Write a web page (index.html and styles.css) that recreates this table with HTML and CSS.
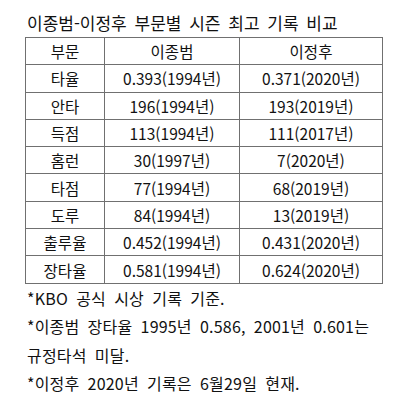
FILE: index.html
```html
<!DOCTYPE html>
<html lang="ko">
<head>
<meta charset="utf-8">
<link rel="stylesheet" href="styles.css">
</head>
<body>
<div class="wrap">
  <div class="title">이종범-이정후 부문별 시즌 최고 기록 비교</div>
  <table class="rec">
    <colgroup><col class="c1"><col class="c2"><col class="c3"></colgroup>
    <tr><td>부문</td><td>이종범</td><td>이정후</td></tr>
    <tr><td>타율</td><td>0.393(1994년)</td><td>0.371(2020년)</td></tr>
    <tr><td>안타</td><td>196(1994년)</td><td>193(2019년)</td></tr>
    <tr><td>득점</td><td>113(1994년)</td><td>111(2017년)</td></tr>
    <tr><td>홈런</td><td>30(1997년)</td><td>7(2020년)</td></tr>
    <tr><td>타점</td><td>77(1994년)</td><td>68(2019년)</td></tr>
    <tr><td>도루</td><td>84(1994년)</td><td>13(2019년)</td></tr>
    <tr><td>출루율</td><td>0.452(1994년)</td><td>0.431(2020년)</td></tr>
    <tr><td>장타율</td><td>0.581(1994년)</td><td>0.624(2020년)</td></tr>
  </table>
  <div class="notes">
    <p>*KBO 공식 시상 기록 기준.</p>
    <p>*이종범 장타율 1995년 0.586, 2001년 0.601는</p>
    <p>규정타석 미달.</p>
    <p>*이정후 2020년 기록은 6월29일 현재.</p>
  </div>
</div>
</body>
</html>
```
FILE: styles.css
```css
html, body { margin: 0; padding: 0; background: #fff; }
body { font-family: "Noto Sans CJK KR", "Noto Sans", sans-serif; color: #111; }
.wrap { padding: 10px 0 0 25px; width: 357px; }
.title { font-size: 17px; line-height: 26px; padding-left: 2px; word-spacing: 3px; white-space: nowrap; }
.rec { border-collapse: collapse; width: 357px; table-layout: fixed; margin-top: 1px; }
.c1 { width: 79px; } .c2 { width: 135px; } .c3 { width: 143px; }
.rec td { border: 1px solid #707070; text-align: center; font-size: 15.5px; height: 26.3px; padding: 0; line-height: 20px; }
.notes { padding-left: 2px; }
.notes p { margin: 0; font-size: 16px; line-height: 28.5px; letter-spacing: 0.2px; word-spacing: 3.5px; white-space: nowrap; }
```
